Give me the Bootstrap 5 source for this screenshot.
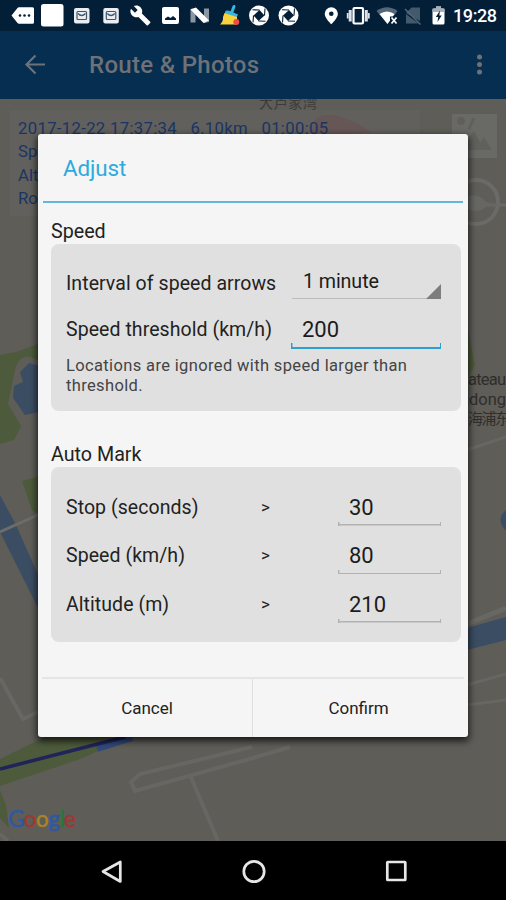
<!DOCTYPE html>
<html lang="en">
<head>
<meta charset="utf-8">
<meta name="viewport" content="width=device-width, initial-scale=1">
<title>Route &amp; Photos</title>
<link rel="stylesheet" href="https://cdn.jsdelivr.net/npm/bootstrap@5.3.0/dist/css/bootstrap.min.css">
<style>
body{font-family:Roboto,"Noto Sans CJK SC",sans-serif;background:#000}
.screen{width:506px;height:900px}
.statusbar{height:31px;background:#031e37}
.appbar{height:68px;background:#052e51;color:#6e7175;padding-left:23px;padding-right:20px}
.appbar h1{font-size:24px;font-weight:500;letter-spacing:.3px;margin-left:41px;padding-top:1px}
.map-area{background:#5e5d58}
.map-area>svg{display:block}
.map-svg text{font-family:Roboto,"Noto Sans CJK SC",sans-serif}
.info-panel{left:10px;top:11px;width:410px;height:106px;padding:7px 8px;background:rgba(112,112,112,.2);color:#1a3564;font-size:16.7px;line-height:23.3px;white-space:pre}
.info-panel .first{letter-spacing:.33px}
.navkeys{height:59px;background:#000}
.dialog{left:38px;top:134px;width:430px;height:603px;background:#f5f5f5;border-radius:3px;box-shadow:0 3px 7px 1px rgba(0,0,0,.75);color:#222}
.dialog-title{height:69px;margin:0 5px;padding:2px 20px 0;border-bottom:2px solid #62b8dc;color:#2daade;font-size:22.4px;letter-spacing:-.1px}
.section-name{font-size:19.7px;line-height:24px;letter-spacing:0;margin-left:13px}
.panel{background:#e0e0e0;border-radius:8px;margin:0 7px 0 13px;padding:0 20px 0 15px}
.speed-panel{height:167px}
.mark-panel{height:175px;padding-top:16px}
.row-label{font-size:19.5px;letter-spacing:.06px;white-space:nowrap}
.hint{font-size:16.5px;line-height:19.5px;letter-spacing:.36px;color:#444;padding-top:7px}
.field{--line:#b2b2b2;--w:1.5px;--tick:4px;color:#1c1c1c;font-size:22px;letter-spacing:0;height:37px;line-height:37px;padding-left:11px;
background:linear-gradient(var(--line),var(--line)) bottom/100% var(--w) no-repeat,linear-gradient(var(--line),var(--line)) left bottom/1.5px var(--tick) no-repeat,linear-gradient(var(--line),var(--line)) right bottom/1.5px var(--tick) no-repeat}
.field.active{--line:#2c9fd0;--w:2.5px;--tick:6px;width:150px;height:37px;line-height:35px}
.spinner-field{width:149px;height:35px;line-height:36px;font-size:19.7px;letter-spacing:-.1px;color:#1c1c1c;padding-left:11px;border-bottom:1.5px solid #bcbcbc}
.spinner-field svg{right:0;bottom:-1px}
.threshold{width:103px}
.mark-row{height:48.5px}
.gt{width:77px;font-size:17px}
.actions{height:60px;margin:0 4px;border-top:2px solid #e5e5e5;font-size:17px}
.actions button{border:0;background:none;color:#222;padding-top:3px}
.actions button:first-child{width:210px}
.actions button+button{border-left:1px solid #dfdfdf}
</style>
<script src="https://cdn.jsdelivr.net/npm/bootstrap@5.3.0/dist/js/bootstrap.bundle.min.js"></script>
</head>
<body>
<div class="screen d-flex flex-column position-relative overflow-hidden">
  <header class="statusbar flex-shrink-0">
    <svg width="506" height="31" viewBox="0 0 506 31" fill="#fff" role="img" aria-label="Status icons">
      <path d="M11.5 15.5L17.5 8Q18 7.200 19 7.200H32.500Q34 7.200 34 8.700V22.300Q34 23.800 32.500 23.800H19Q18 23.800 17.500 23Z"/>
      <g fill="#031e37"><circle cx="20" cy="15.500" r="1.300"/><circle cx="24.500" cy="15.500" r="1.300"/><circle cx="29" cy="15.500" r="1.300"/></g>
      <rect x="41" y="4" width="22.500" height="22.500" rx="2.500"/>
      <g id="mail"><rect x="74" y="8" width="15.500" height="15.500" rx="2" fill="#e9edf2"/><rect x="77" y="11.500" width="9.500" height="8" rx="1" fill="none" stroke="#40566b" stroke-width="1.200"/><path d="M78 13.500Q81.700 17.500 85.500 13.500" fill="none" stroke="#40566b" stroke-width="1.300"/></g>
      <use href="#mail" x="29.300"/>
      <path transform="translate(129.500 4.500) scale(.91)" d="M22.700 19l-9.100-9.100c.9-2.300.4-5-1.500-6.900-2-2-5-2.400-7.400-1.300L9 6 6 9 1.600 4.700C.4 7.100.9 10.100 2.900 12.100c1.900 1.900 4.600 2.400 6.900 1.500l9.100 9.100c.4.400 1 .4 1.400 0l2.300-2.300c.5-.4.5-1.100.1-1.400z"/>
      <rect x="162" y="7" width="17" height="17" rx="2"/><path d="M165 20v-1.500l3-2 2.500 1.500 2.500-2 3 2.500v1.500z" fill="#031e37"/>
      <path d="M190.500 9l5-1V22.500h-5zM204 8.500h5v13.500l-5 1z" fill="#8996a3"/><path d="M190.500 9.500L196 7.500 209 20.500 203.500 23Z"/>
      <path d="M231.500 13L234 6.500" stroke="#35b8df" stroke-width="3" stroke-linecap="round"/><path d="M225 12Q226 9.500 231 11.500L238 14.500 236.500 17.500 225 13.500Z" fill="#35b8df"/><path d="M224.500 13L237 17V24.500H220Q223.500 21 223 17Z" fill="#fbd23d"/><circle cx="236.300" cy="22" r="3" fill="#ee4c46"/>
      <g id="shutter"><circle cx="259" cy="15.500" r="10"/><path d="M259.500 10L264.500 15.500 258.500 21 253.500 15.500Z" fill="#031e37"/><path d="M252.500 9.800L259.500 10M265 8.500L264.500 15.500M265.500 21.200L258.500 21M253 22.500L253.500 15.500" stroke="#031e37" stroke-width="1.100"/></g>
      <use href="#shutter" x="29.500"/>
      <path fill-rule="evenodd" d="M331.300 7.200a6.600 6.600 0 0 0-6.600 6.600c0 4.600 6.600 10.400 6.600 10.400s6.600-5.800 6.600-10.400a6.600 6.600 0 0 0-6.600-6.600zm0 4.200a2.300 2.300 0 1 1 0 4.600 2.300 2.300 0 0 1 0-4.600z"/>
      <rect x="353.500" y="8" width="9.500" height="15.500" rx="1" fill="none" stroke="#fff" stroke-width="2.200"/><path d="M350.200 10v11.500M366.300 10v11.500" stroke="#dce2e8" stroke-width="3"/><path d="M347.700 13v5.500M368.800 13v5.500" stroke="#dce2e8" stroke-width="1.800"/>
      <path d="M376.500 11Q387 3.500 397.500 11L387.500 24Z" fill="#536779"/><path d="M379.500 14Q387 9 394.500 14L387.500 24Z"/><path d="M390 16.500h7v8h-7z" fill="#031e37"/><path d="M391.500 17.500l5 6M396.500 17.500l-5 6" stroke="#fff" stroke-width="1.700"/>
      <path d="M406 13L411.500 7.500H420V21ZM406 14V23.500H418.500Z" fill="#435a6d"/><path d="M405 9L420.500 24.500" stroke="#526779" stroke-width="1.500"/>
      <path d="M436 6.500H441V8.500H443Q444.500 8.500 444.500 10V23Q444.500 24.500 443 24.500H434Q432.500 24.500 432.500 23V10Q432.500 8.500 434 8.500H436Z"/><path d="M436 6.500h5v2h3.500V12h-12V8.500H436z" fill="#a6b0ba"/><path d="M440 10.500L435.800 17H438.200L437.500 22 441.700 15.500H439.300Z" fill="#031e37"/>
      <text x="453" y="22" font-family="Roboto" font-size="18" font-weight="500" textLength="44">19:28</text>
    </svg>
  </header>
  <nav class="appbar flex-shrink-0 d-flex align-items-center">
    <svg width="25" height="24" viewBox="0 0 25 24" fill="none" stroke="#6e7175" stroke-width="2.200"><path d="M22 11.500H4M12.500 2.500L3.500 11.500 12.500 20.500"/></svg>
    <h1 class="mb-0">Route &amp; Photos</h1>
    <svg class="ms-auto" width="13" height="24" fill="#6e7175"><circle cx="6.500" cy="4" r="2.500"/><circle cx="6.500" cy="11.500" r="2.500"/><circle cx="6.500" cy="19" r="2.500"/></svg>
  </nav>
  <main class="map-area flex-grow-1 position-relative">
    <svg class="map-svg" width="506" height="742" viewBox="0 99 506 742">
      <path d="M0 355L16 352 38 344V360Q20 350 15 370L8 404 21 426 14 440 0 444Z" fill="#4d5a3b"/>
      <path d="M20 372L29 363 40 366V412L25 415 13 398 14 386 23 382Z" fill="#3b4d63"/>
      <path d="M22 481L40 476V515L32 510Z" fill="#4d5a3b"/>
      <path d="M0 495L15 523 40 579V612L0 532Z" fill="#3b4d63"/>
      <path d="M0 532L40 514" stroke="#6c6c69" stroke-width="3"/>
      <path d="M0 678L23 719 40 711" fill="none" stroke="#676764" stroke-width="4"/>
      <path d="M316 118Q335 108 371 132L310 138Z" fill="#65504f"/>
      <path d="M467 325L475 365 467 380Z" fill="#4d5a3b"/>
      <path d="M467 450L506 437M467 685L506 674M467 705L506 700" stroke="#666663" stroke-width="3"/>
      <path d="M467 624L506 608" stroke="#676764" stroke-width="5"/>
      <path d="M467 628L506 617V640L467 650Z" fill="#3b4d63"/><path d="M506 510Q495 519 506 531Z" fill="#3b4d63"/>
      <path d="M0 759L45 737H130L80 759 0 786Z" fill="#4d5a3b"/><path d="M0 790V818L9 828 6 805Z" fill="#4d5a3b"/>
      <path d="M97 748L132 737" stroke="#304a7b" stroke-width="8"/><path d="M0 769L125 737" stroke="#21235b" stroke-width="3.500"/>
      <path d="M252 747L140 774 131 782 135 791 253 758 290 747M190 775L218 841M0 834L8 841" fill="none" stroke="#666663" stroke-width="4"/>
      <text x="259" y="108" font-size="14" fill="#3c3b38" textLength="58">大芦家湾</text>
      <rect x="452" y="114" width="45" height="44" fill="#696966"/>
      <path d="M459 150L474 131 484 149 480 150M475 150L484 137 492 150Z" fill="#60605c"/><circle cx="461" cy="121" r="4" fill="#5f5f5b"/><path d="M474 118L469 129" stroke="#5f5f5b" stroke-width="3"/>
      <circle cx="476" cy="202" r="22" fill="none" stroke="#6a6a67" stroke-width="4"/><path d="M486 205H506" stroke="#6a6a67" stroke-width="3"/><path d="M467 196Q480 193 486 202L499 205 486 207Q478 214 467 209Z" fill="#666663"/>
      <g font-size="16.500" fill="#302e2b"><text x="468" y="385" textLength="38">ateau</text><text x="460" y="405" textLength="46">udong</text><text x="468" y="424" font-size="15" textLength="42">海浦东</text></g>
      <text style="font-family:Lato,sans-serif" font-size="22.500" stroke-width=".5" x="8" y="827" textLength="68"><tspan fill="#2c59a5" stroke="#2c59a5">G</tspan><tspan fill="#9d3835" stroke="#9d3835">o</tspan><tspan fill="#a98426" stroke="#a98426">o</tspan><tspan fill="#2c59a5" stroke="#2c59a5">g</tspan><tspan fill="#287840" stroke="#287840">l</tspan><tspan fill="#9d3835" stroke="#9d3835">e</tspan></text>
    </svg>
    <div class="info-panel position-absolute"><div class="first">2017-12-22 17:37:34   6.10km   01:00:05</div><div>Sp</div><div>Alt</div><div>Ro</div></div>
  </main>
  <footer class="navkeys flex-shrink-0">
    <svg width="506" height="59" viewBox="0 841 506 59" fill="none" stroke="#e6e6e6" stroke-width="2.700" role="img" aria-label="Navigation keys"><path d="M120.300 862V881.500L103 871.500Z" stroke-linejoin="round"/><circle cx="254" cy="871.500" r="10.200"/><rect x="387.300" y="862" width="18" height="18" rx=".5"/></svg>
  </footer>

  <section class="dialog position-absolute d-flex flex-column" role="dialog" aria-label="Adjust">
    <div class="dialog-title d-flex align-items-center flex-shrink-0"><span>Adjust</span></div>
    <div class="flex-grow-1">
      <div class="section-name" style="padding-top:17px">Speed</div>
      <div class="panel speed-panel">
        <div class="d-flex justify-content-between align-items-center" style="padding-top:20px">
          <span class="row-label pt-1">Interval of speed arrows</span>
          <div class="spinner-field position-relative">1 minute<svg class="position-absolute" width="15" height="15"><path d="M15 0V15H0Z" fill="#7d7d7d"/></svg></div>
        </div>
        <div class="d-flex justify-content-between" style="padding-top:13px">
          <span class="row-label" style="line-height:36px">Speed threshold (km/h)</span>
          <div class="field active">200</div>
        </div>
        <div class="hint">Locations are ignored with speed larger than threshold.</div>
      </div>
      <div class="section-name" style="padding-top:32px">Auto Mark</div>
      <div class="panel mark-panel">
        <div class="mark-row d-flex align-items-center"><span class="row-label flex-grow-1">Stop (seconds)</span><span class="gt">&gt;</span><div class="field threshold">30</div></div>
        <div class="mark-row d-flex align-items-center"><span class="row-label flex-grow-1">Speed (km/h)</span><span class="gt">&gt;</span><div class="field threshold">80</div></div>
        <div class="mark-row d-flex align-items-center"><span class="row-label flex-grow-1">Altitude (m)</span><span class="gt">&gt;</span><div class="field threshold">210</div></div>
      </div>
    </div>
    <div class="actions d-flex flex-shrink-0"><button>Cancel</button><button class="flex-grow-1">Confirm</button></div>
  </section>
</div>
</body>
</html>
